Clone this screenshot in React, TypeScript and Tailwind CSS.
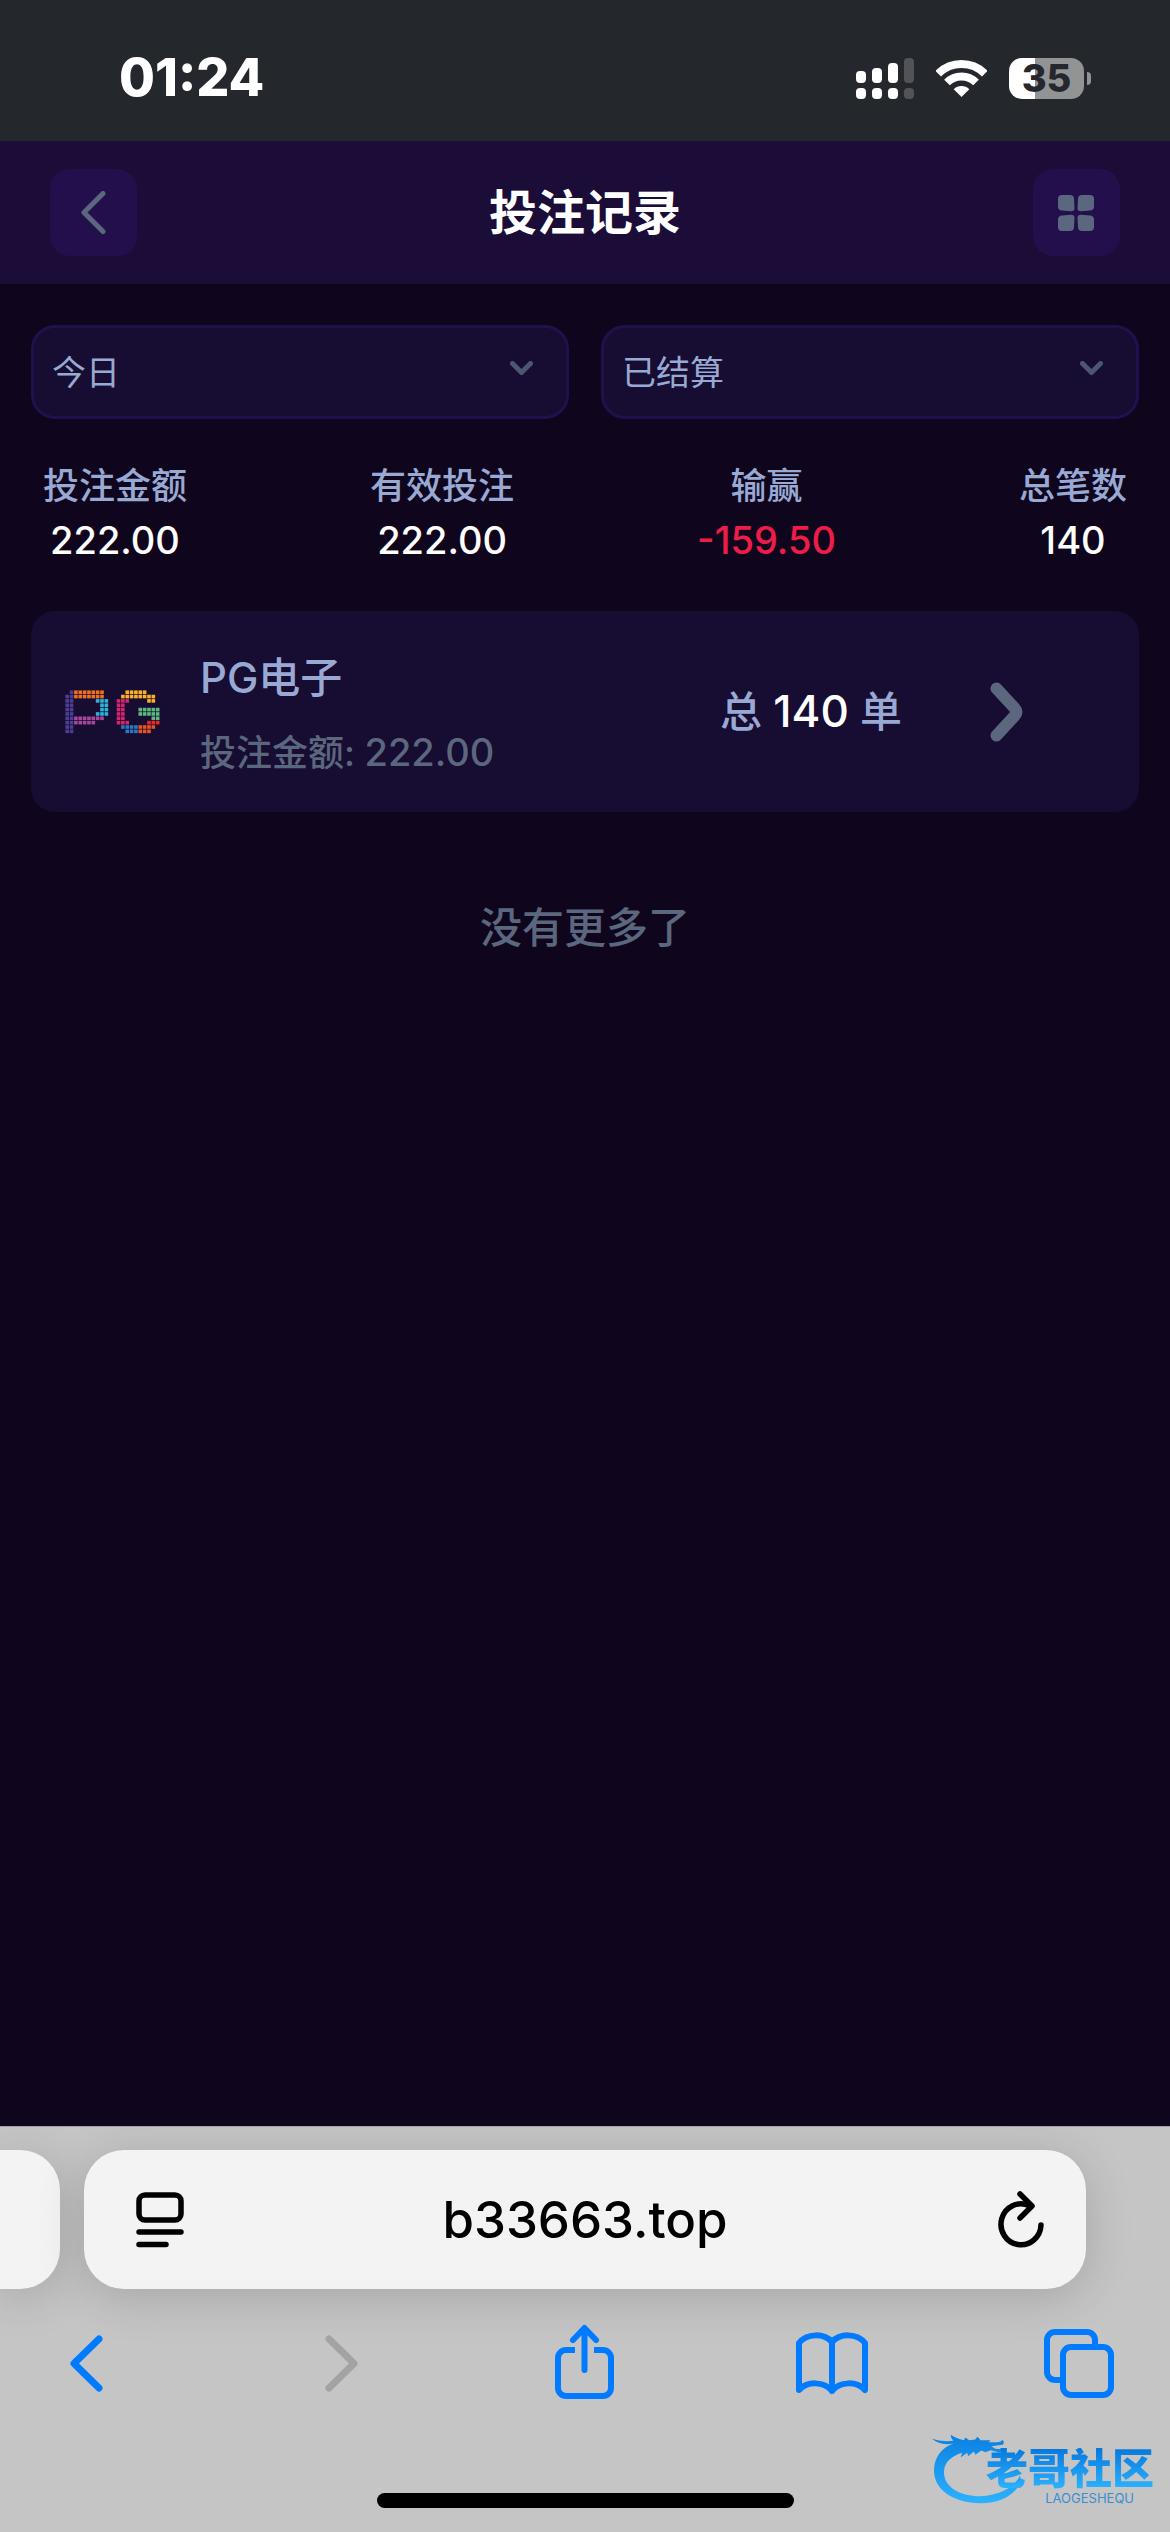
import type { ReactNode } from 'react';

const stats = [
  { label: '投注金额', value: '222.00' },
  { label: '有效投注', value: '222.00' },
  { label: '输赢', value: '-159.50', negative: true },
  { label: '总笔数', value: '140' },
];

// one run of dots: [row, first column, last column, colour]
const logoDots: [number, number, number, string][] = [
  [0, 1, 1, '#4f3d94'], [0, 2, 8, '#f0701c'],
  [1, 0, 1, '#4f3d94'], [1, 2, 8, '#f0701c'],
  [2, 0, 1, '#4f3d94'], [2, 7, 9, '#2fb4d8'],
  [3, 0, 1, '#4f3d94'], [3, 8, 9, '#2fb4d8'],
  [4, 0, 1, '#4f3d94'], [4, 8, 9, '#2fb4d8'],
  [5, 0, 1, '#4f3d94'], [5, 7, 9, '#2fb4d8'],
  [6, 0, 1, '#4f3d94'], [6, 2, 8, '#a84699'],
  [7, 0, 1, '#4f3d94'], [7, 2, 6, '#a84699'],
  [8, 0, 1, '#4f3d94'],
  [9, 0, 1, '#4f3d94'],
  [0, 13.8, 17.8, '#fbb324'],
  [1, 12.8, 19.8, '#fbb324'],
  [2, 11.8, 13.8, '#d8246e'], [2, 18.8, 19.8, '#fbb324'],
  [3, 11.8, 12.8, '#d8246e'],
  [4, 11.8, 12.8, '#d8246e'], [4, 16.8, 20.8, '#5dba7d'],
  [5, 11.8, 12.8, '#d8246e'], [5, 16.8, 20.8, '#5dba7d'],
  [6, 11.8, 12.8, '#d8246e'], [6, 19.8, 20.8, '#5dba7d'],
  [7, 11.8, 13.8, '#d8246e'], [7, 18.8, 20.8, '#e8292b'],
  [8, 12.8, 15.8, '#2a78c2'], [8, 16.8, 19.8, '#ea5420'],
  [9, 13.8, 15.8, '#2a78c2'], [9, 16.8, 18.8, '#ea5420'],
];

function PGLogo() {
  return (
    <svg width="95" height="44" viewBox="0 0 95 44" aria-hidden="true">
      {logoDots.flatMap(([row, from, to, color]) =>
        Array.from({ length: Math.round(to - from) + 1 }, (_, i) => (
          <rect key={`${row}-${from}-${i}`} x={(from + i) * 4.35 + 0.4} y={row * 4.35 + 0.4} width="3.6" height="3.6" fill={color} />
        ))
      )}
    </svg>
  );
}

function StatusBar() {
  return (
    <div className="h-[141px] bg-[#24272c] flex items-center justify-between pl-[119px] pr-[79px] pt-[15px]">
      <p className="text-[52px] leading-[60px] font-extrabold text-white">01:24</p>
      <div className="flex items-center gap-[22px]">
        <svg width="58" height="41" viewBox="0 0 58 41" fill="#fff" aria-label="信号">
          <rect x="0" y="13" width="10" height="12" rx="4" />
          <rect x="16" y="10" width="10" height="15" rx="4" />
          <rect x="32" y="5" width="10" height="20" rx="4" />
          <rect x="48" y="0" width="10" height="25" rx="4" fill="#525357" />
          <rect x="0" y="30" width="10" height="11" rx="4" />
          <rect x="16" y="30" width="10" height="11" rx="4" />
          <rect x="32" y="30" width="10" height="11" rx="4" />
          <rect x="48" y="30" width="10" height="11" rx="4" fill="#525357" />
        </svg>
        <svg width="51" height="37" viewBox="0 0 51 37" fill="none" stroke="#fff" strokeWidth="8" aria-label="Wi-Fi">
          <path d="M2.2 13.7a33 33 0 0 1 46.6 0" />
          <path d="M11 22.5a20.5 20.5 0 0 1 29 0" />
          <path d="M25.5 37l-7.8-7.8a11 11 0 0 1 15.6 0z" fill="#fff" stroke="none" />
        </svg>
        <div className="flex items-center gap-[3px]">
          <div className="w-[75px] h-[41px] rounded-[13px] bg-linear-to-r from-white from-35% to-[#929395] to-35% text-center text-[38px] leading-[41px] font-extrabold text-[#24272c]">
            35
          </div>
          <div className="w-1 h-[13px] rounded-r-full bg-[#929395]" />
        </div>
      </div>
    </div>
  );
}

function HeaderButton({ label, children }: { label: string; children: ReactNode }) {
  return (
    <button type="button" aria-label={label} className="size-[87px] rounded-[20px] bg-[#220f4b] flex items-center justify-center">
      {children}
    </button>
  );
}

function FilterSelect({ label, options }: { label: string; options: string[] }) {
  return (
    <div className="relative flex-1">
      <select aria-label={label} className="w-full h-[94px] pl-[18px] appearance-none rounded-3xl border-3 border-[#22104c] bg-[#170c31] text-[34px] text-[#98a9d3]">
        {options.map(o => <option key={o}>{o}</option>)}
      </select>
      <svg className="absolute right-9 top-9 pointer-events-none" width="23" height="14" viewBox="0 0 23 14" fill="none" stroke="#4c5670" strokeWidth="5" strokeLinecap="round" strokeLinejoin="round">
        <path d="M2.5 2.5l9 9 9-9" />
      </svg>
    </div>
  );
}

function ToolButton({ label, disabled, children }: { label: string; disabled?: boolean; children: ReactNode }) {
  return (
    <button type="button" aria-label={label} disabled={disabled} className="text-[#007aff] disabled:text-[#a3a3a3]">
      <svg width="80" height="80" viewBox="0 0 80 80" fill="none" stroke="currentColor" strokeWidth="6" strokeLinecap="round" strokeLinejoin="round">
        {children}
      </svg>
    </button>
  );
}

function Watermark() {
  return (
    <div className="absolute right-4 bottom-[26px] w-[222px] h-[72px] pointer-events-none">
      <svg className="absolute left-0 top-0" width="90" height="71" viewBox="36 48 270 212" aria-hidden="true">
        <defs>
          <linearGradient id="dragon" x1="0" y1="0" x2="0" y2="1">
            <stop offset="0" stopColor="#0b80e2" />
            <stop offset="1" stopColor="#2bb2ff" />
          </linearGradient>
        </defs>
        <path
          fill="url(#dragon)"
          d="M36 62Q64 72 100 68Q92 60 92 50Q108 62 132 66L136 58L148 66L166 64L172 56L182 66L212 66L206 72L230 72Q246 72 246 64Q256 72 248 80L214 84L226 92L246 93L240 104L212 96L196 102L184 97L166 110L162 100L144 114L142 104L122 118L126 104Q72 122 72 162C72 208 122 234 180 234C240 232 284 206 300 172Q304 188 300 196C280 236 230 256 180 255C100 253 42 216 42 156C42 118 66 88 100 76Q62 84 36 62Z"
        />
      </svg>
      <div className="relative h-full flex flex-col items-end justify-end">
        <p className="text-[42px] leading-[42px] font-black whitespace-nowrap bg-linear-to-b from-[#0878dc] to-[#2cb4ff] bg-clip-text text-transparent">老哥社区</p>
        <p className="pr-5 text-[13px] leading-4 text-[#3b8fd0]">LAOGESHEQU</p>
      </div>
    </div>
  );
}

function BrowserBar() {
  return (
    <footer className="relative bg-[#c5c5c5] border-t border-[#a2a2a4] pt-[23px] pb-6 overflow-hidden">
      <div className="flex gap-6 pr-[84px]">
        <div className="w-[60px] h-[139px] rounded-r-[40px] bg-[#f3f3f3] shadow-[0_8px_48px_rgba(0,0,0,0.16)]" />
        <div className="flex-1 min-w-0 h-[139px] rounded-[40px] bg-[#f3f3f3] shadow-[0_8px_48px_rgba(0,0,0,0.16)] flex items-center justify-between px-[42px]">
          <button type="button" aria-label="页面菜单" className="w-[68px] pl-[10px]">
            <svg width="48" height="56" viewBox="0 0 48 56" fill="none" stroke="#000" strokeWidth="5.5" strokeLinecap="round">
              <rect x="3" y="3" width="42" height="25" rx="6" />
              <path d="M3 40h42M3 52.500h27" />
            </svg>
          </button>
          <input aria-label="地址" readOnly value="b33663.top" className="flex-1 min-w-0 bg-transparent text-center text-[51px] leading-[60px] font-medium text-black outline-none" />
          <button type="button" aria-label="刷新" className="w-[68px] flex justify-end">
            <svg width="46" height="58" viewBox="0 0 46 58" fill="none" stroke="#000" strokeWidth="5.5" strokeLinecap="round" strokeLinejoin="round">
              <path d="M31 14.500A20 20.500 0 1 0 43 34" />
              <path d="M22 3l12 12-12 12" />
            </svg>
          </button>
        </div>
      </div>
      <nav className="mt-[34px] px-12 flex items-center justify-between">
        <ToolButton label="后退">
          <path strokeWidth="7" d="M51 16L26 40.500l25 24.500" />
        </ToolButton>
        <ToolButton label="前进" disabled>
          <path strokeWidth="7" d="M32 16l25 24.500L32 65" />
        </ToolButton>
        <ToolButton label="分享">
          <path strokeLinecap="butt" d="M30 27H21a8 8 0 0 0-8 8v30a8 8 0 0 0 8 8h37a8 8 0 0 0 8-8V35a8 8 0 0 0-8-8h-9" />
          <path d="M39.500 47V6M28 17L39.500 5 51 17" />
        </ToolButton>
        <ToolButton label="书签">
          <path d="M38 19C30 10 13 10 5 20v47c8-9 25-9 33 1c8-10 25-10 33-1V20C63 10 46 10 38 19zM38 19v49" />
        </ToolButton>
        <ToolButton label="标签页">
          <rect x="21" y="24" width="48" height="48" rx="8" />
          <path strokeLinecap="butt" d="M53 24v-7a8 8 0 0 0-8-8H13a8 8 0 0 0-8 8v32a8 8 0 0 0 8 8h8" />
        </ToolButton>
      </nav>
      <div className="mt-[90px] mx-auto w-[417px] h-[15px] rounded-full bg-black" />
      <Watermark />
    </footer>
  );
}

export default function App() {
  return (
    <div className="min-h-screen flex flex-col bg-[#0f061e] font-['Inter','Noto_Sans_CJK_SC',sans-serif]">
      <StatusBar />
      <header className="bg-[#1b0d37] px-[50px] py-7 flex items-center justify-between">
        <HeaderButton label="返回">
          <svg width="26" height="44" viewBox="0 0 26 44" fill="none" stroke="#5b667f" strokeWidth="5" strokeLinecap="round" strokeLinejoin="round">
            <path d="M22 2.500L3 21.500l19 19" />
          </svg>
        </HeaderButton>
        <h1 className="text-[48px] leading-[60px] font-bold text-white">投注记录</h1>
        <HeaderButton label="菜单">
          <svg width="36" height="36" viewBox="0 0 36 36" fill="#5b667f">
            <path d="M4 0h8q4 0 4 4l.5 9q0 3.500-3.500 3.300L4 15.500q-4-.3-4-4V4q0-4 4-4z" />
            <path d="M24 0h8q4 0 4 4v7.500q0 3.700-4 4l-9 .8q-3.500.2-3.500-3.300L20 4q0-4 4-4z" />
            <path d="M4 20.500l9-.8q3.500-.2 3.500 3.300L16 32q0 4-4 4H4q-4 0-4-4v-7.500q0-3.700 4-4z" />
            <path d="M32 20.500q4 .3 4 4V32q0 4-4 4h-8q-4 0-4-4l-.5-9q0-3.500 3.500-3.300z" />
          </svg>
        </HeaderButton>
      </header>

      <main className="flex-1 px-[31px] pt-[41px]">
        <div className="flex gap-8">
          <FilterSelect label="日期" options={['今日', '昨日', '近7日']} />
          <FilterSelect label="状态" options={['已结算', '未结算']} />
        </div>

        <dl className="mt-10 px-3 flex justify-between text-center leading-[54px] font-medium">
          {stats.map(s => (
            <div key={s.label}>
              <dt className="text-[36px] text-[#98a9d3]">{s.label}</dt>
              <dd className={`text-[38px] ${s.negative ? 'text-[#ed1d49]' : 'text-white'}`}>{s.value}</dd>
            </div>
          ))}
        </dl>

        <button type="button" className="mt-11 w-full h-[201px] rounded-3xl bg-[#170c31] pl-[34px] pr-[115px] flex items-center text-left font-medium">
          <PGLogo />
          <span className="ml-10 pt-2 flex-1">
            <span className="block text-[42px] leading-[74px] text-[#98a9d3]">PG电子</span>
            <span className="block text-[36px] leading-[74px] text-[#5b667f]">
              投注金额: <span className="text-[38px]">222.00</span>
            </span>
          </span>
          <span className="text-[42px] leading-[74px] text-[#98a9d3]">
            总 <span className="text-[44px] text-white">140</span> 单
          </span>
          <svg className="ml-[88px]" width="34" height="60" viewBox="0 0 34 60" fill="none" stroke="#5b667f" strokeWidth="12" strokeLinecap="round" strokeLinejoin="round">
            <path d="M6.500 6.500L24.500 26q3.500 4 0 8L6.500 53.500" />
          </svg>
        </button>

        <p className="mt-[86px] text-center text-[42px] leading-[60px] font-medium text-[#5b667f]">没有更多了</p>
      </main>

      <BrowserBar />
    </div>
  );
}
